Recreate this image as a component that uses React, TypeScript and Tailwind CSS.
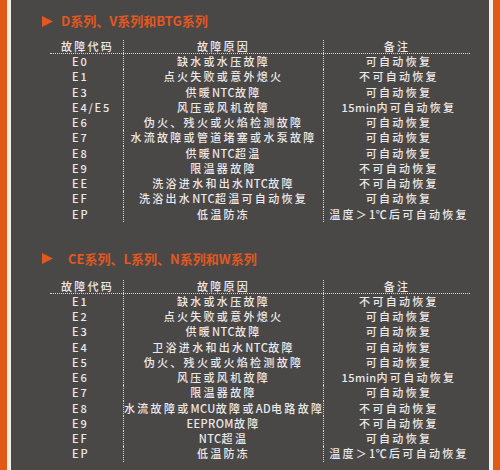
import React from "react";

type Row = [string, string, string];

const seriesA: Row[] = [
  ["E0", "缺水或水压故障", "可自动恢复"],
  ["E1", "点火失败或意外熄火", "不可自动恢复"],
  ["E3", "供暖NTC故障", "可自动恢复"],
  ["E4/E5", "风压或风机故障", "15min内可自动恢复"],
  ["E6", "伪火、残火或火焰检测故障", "可自动恢复"],
  ["E7", "水流故障或管道堵塞或水泵故障", "可自动恢复"],
  ["E8", "供暖NTC超温", "可自动恢复"],
  ["E9", "限温器故障", "不可自动恢复"],
  ["EE", "洗浴进水和出水NTC故障", "不可自动恢复"],
  ["EF", "洗浴出水NTC超温可自动恢复", "可自动恢复"],
  ["EP", "低温防冻", "温度＞1℃后可自动恢复"],
];

const seriesB: Row[] = [
  ["E1", "缺水或水压故障", "不可自动恢复"],
  ["E2", "点火失败或意外熄火", "可自动恢复"],
  ["E3", "供暖NTC故障", "可自动恢复"],
  ["E4", "卫浴进水和出水NTC故障", "可自动恢复"],
  ["E5", "伪火、残火或火焰检测故障", "可自动恢复"],
  ["E6", "风压或风机故障", "15min内可自动恢复"],
  ["E7", "限温器故障", "可自动恢复"],
  ["E8", "水流故障或MCU故障或AD电路故障", "不可自动恢复"],
  ["E9", "EEPROM故障", "不可自动恢复"],
  ["EF", "NTC超温", "可自动恢复"],
  ["EP", "低温防冻", "温度＞1℃后可自动恢复"],
];

// latin runs inside chinese text are set tighter, like the condensed original
const fmt = (text: string) =>
  text.split(/([A-Za-z0-9]+)/).map((part, i) =>
    /^[A-Za-z0-9]+$/.test(part) ? (
      <span key={i} className="tracking-[0.4px]">
        {part}
      </span>
    ) : (
      part
    )
  );

const Arrow = () => (
  <svg width="11" height="11" viewBox="0 0 11 11" className="shrink-0">
    <polygon points="0,0 11,5.5 0,11" fill="#e2581e" />
  </svg>
);

const Heading: React.FC<{ title: string; gap: string }> = ({ title, gap }) => (
  <div className={`h-[20px] flex items-center ${gap}`}>
    <Arrow />
    <span className="text-[13px] font-bold text-[#e2581e] leading-[20px]">{title}</span>
  </div>
);

const FaultTable: React.FC<{ rows: Row[] }> = ({ rows }) => (
  <div className="ml-[8px] w-[420px] text-[11px] text-[#ebe9e9] tracking-[2.3px] font-medium">
    <div className="grid grid-cols-[74px_200px_146px] h-[14px] leading-[13px] border-b border-dotted border-[#d8d8d8]">
      <div className="text-center border-r border-dotted border-[#d8d8d8] pl-[2px]">故障代码</div>
      <div className="text-center border-r border-dotted border-[#d8d8d8]">故障原因</div>
      <div className="text-center">备注</div>
    </div>
    {rows.map((r) => (
      <div key={r[0]} className="grid grid-cols-[74px_200px_146px] h-[15.25px] leading-[15.25px] whitespace-nowrap">
        <div className="pl-[22px] tracking-[1.8px] border-r border-dotted border-[#d8d8d8]">{r[0]}</div>
        <div className="text-center border-r border-dotted border-[#d8d8d8]">{fmt(r[1])}</div>
        <div className="text-center pl-[4px]">{fmt(r[2])}</div>
      </div>
    ))}
  </div>
);

export default function App() {
  return (
    <div
      className="w-[500px] h-[470px] flex overflow-hidden"
      style={{ fontFamily: '"Noto Sans CJK SC", "Noto Sans", sans-serif' }}
    >
      <div className="w-[7px] bg-[#e05a16]" />
      <div className="w-[4px] bg-[#f6efe8]" />
      <div className="flex-1 bg-[#4a4747] flex flex-col pt-[11px] pl-[31px]">
        <Heading title="D系列、V系列和BTG系列" gap="gap-[8px]" />
        <div className="mt-[9px]">
          <FaultTable rows={seriesA} />
        </div>
        <div className="mt-[27px]">
          <Heading title="CE系列、L系列、N系列和W系列" gap="gap-[15px]" />
        </div>
        <div className="mt-[11px]">
          <FaultTable rows={seriesB} />
        </div>
      </div>
      <div className="w-[4px] bg-[#f6efe8]" />
      <div className="w-[7px] bg-[#e05a16]" />
    </div>
  );
}
